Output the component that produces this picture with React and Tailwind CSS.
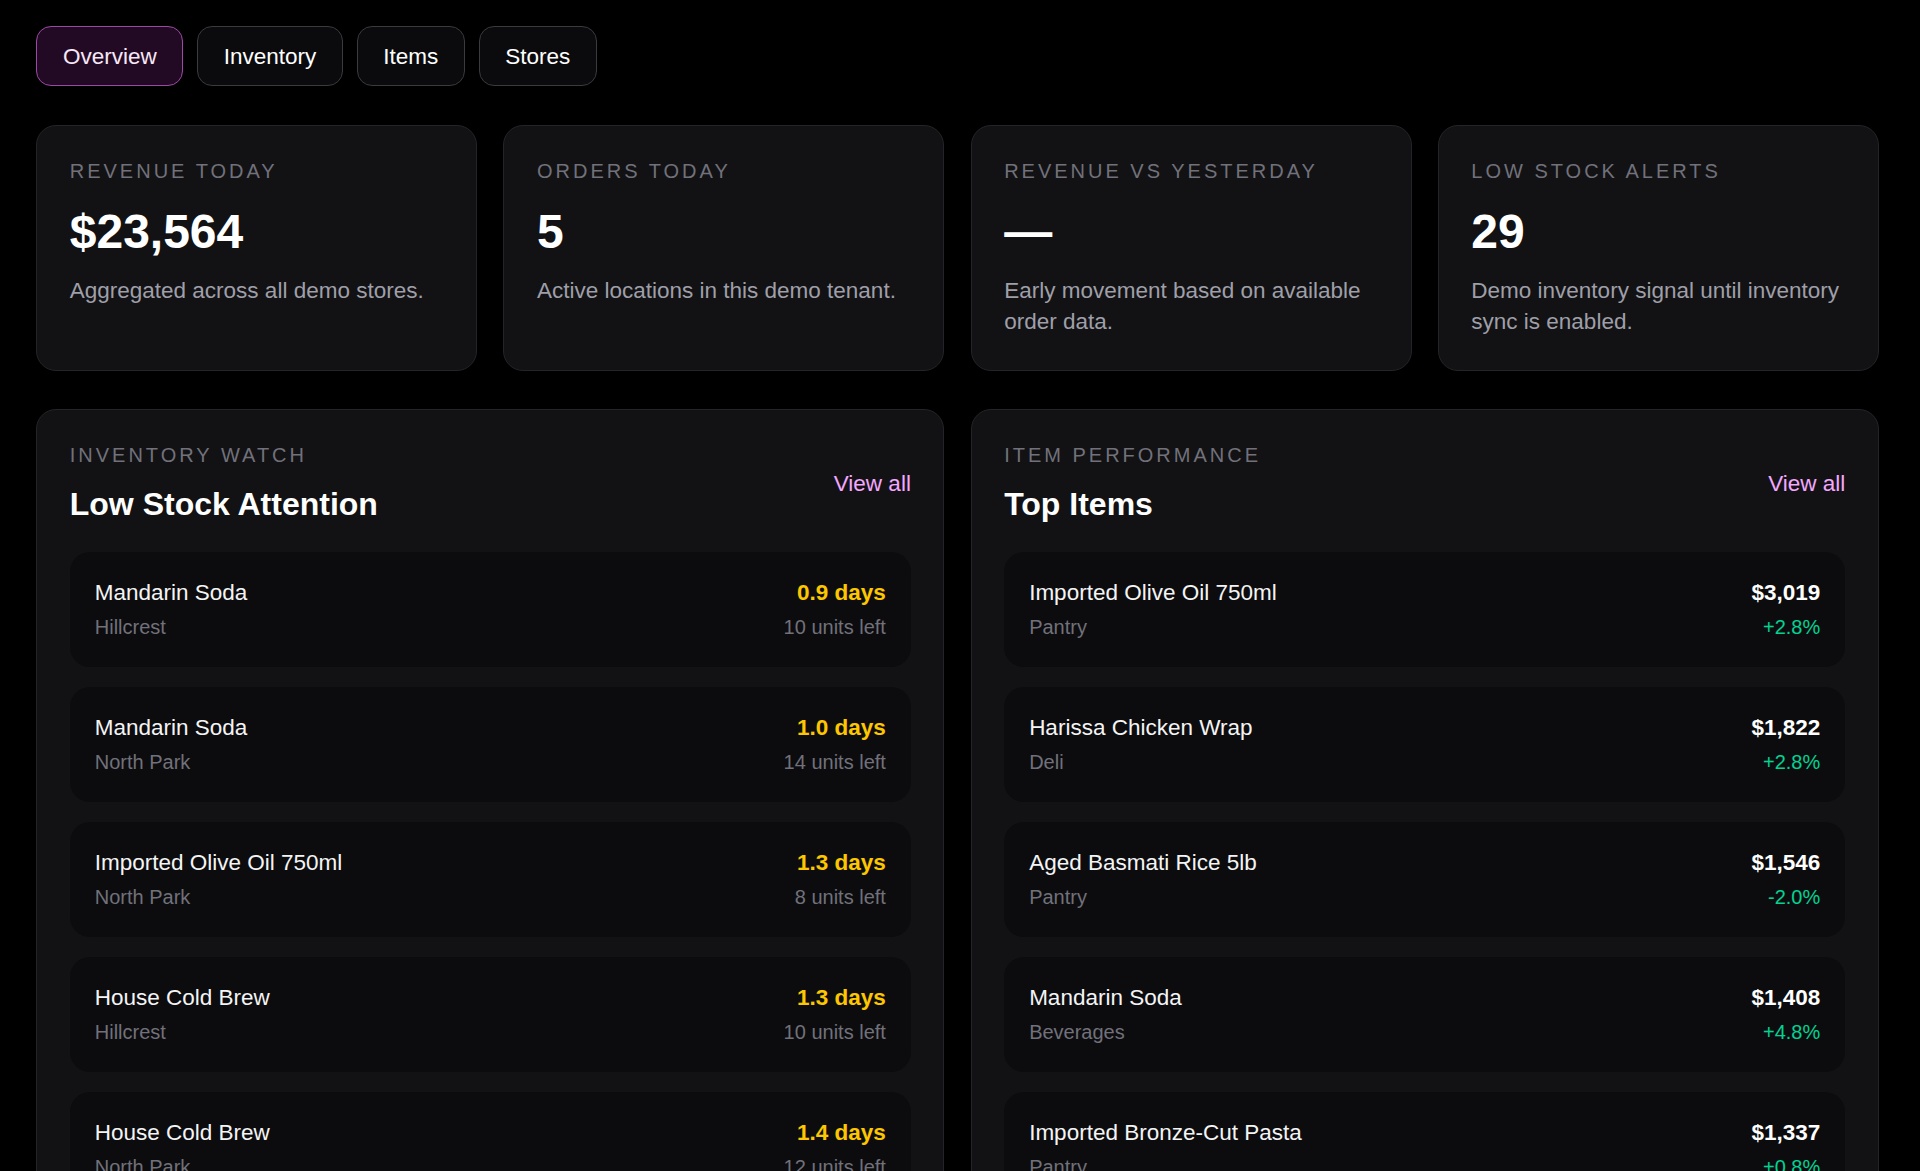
import React from "react";

const tabs = ["Overview", "Inventory", "Items", "Stores"];

const kpis = [
  { label: "Revenue today", value: "$23,564", desc: "Aggregated across all demo stores." },
  { label: "Orders today", value: "5", desc: "Active locations in this demo tenant." },
  { label: "Revenue vs yesterday", value: "—", desc: "Early movement based on available order data." },
  { label: "Low stock alerts", value: "29", desc: "Demo inventory signal until inventory sync is enabled." },
];

const lowStock = [
  { name: "Mandarin Soda", store: "Hillcrest", days: "0.9 days", units: "10 units left" },
  { name: "Mandarin Soda", store: "North Park", days: "1.0 days", units: "14 units left" },
  { name: "Imported Olive Oil 750ml", store: "North Park", days: "1.3 days", units: "8 units left" },
  { name: "House Cold Brew", store: "Hillcrest", days: "1.3 days", units: "10 units left" },
  { name: "House Cold Brew", store: "North Park", days: "1.4 days", units: "12 units left" },
];

const topItems = [
  { name: "Imported Olive Oil 750ml", cat: "Pantry", amount: "$3,019", change: "+2.8%" },
  { name: "Harissa Chicken Wrap", cat: "Deli", amount: "$1,822", change: "+2.8%" },
  { name: "Aged Basmati Rice 5lb", cat: "Pantry", amount: "$1,546", change: "-2.0%" },
  { name: "Mandarin Soda", cat: "Beverages", amount: "$1,408", change: "+4.8%" },
  { name: "Imported Bronze-Cut Pasta", cat: "Pantry", amount: "$1,337", change: "+0.8%" },
];

function Label({ children }) {
  return (
    <div className="text-base uppercase leading-6 tracking-[0.15em] text-zinc-500">{children}</div>
  );
}

function Panel({ label, title, children }) {
  return (
    <section className="rounded-2xl border border-[#242428] bg-[#121214] px-[26px] py-6">
      <div className="flex items-center justify-between">
        <div>
          <Label>{label}</Label>
          <h2 className="mt-[11px] text-[1.6rem] font-bold leading-tight text-white">{title}</h2>
        </div>
        <a className="pt-0.5 text-lg leading-7 text-fuchsia-300">View all</a>
      </div>
      <div className="mt-[22px] flex flex-col gap-4">{children}</div>
    </section>
  );
}

function Row({ title, sub, right, rightSub, rightClass, subClass }) {
  return (
    <div className="flex items-start justify-between rounded-2xl bg-[#0c0c0e] p-5">
      <div>
        <div className="text-lg leading-[26px] text-zinc-100">{title}</div>
        <div className="mt-0.5 text-base leading-6 text-zinc-500">{sub}</div>
      </div>
      <div className="text-right">
        <div className={`text-lg font-bold leading-[26px] ${rightClass}`}>{right}</div>
        <div className={`mt-0.5 text-base leading-6 ${subClass}`}>{rightSub}</div>
      </div>
    </div>
  );
}

export default function App() {
  return (
    <div className="min-h-screen bg-black font-['Liberation_Sans',Arial,Helvetica,sans-serif] text-zinc-100">
      <div className="[zoom:1.25] pl-[29px] pr-[33px] pt-[21px] pb-10">
        <nav className="flex gap-[11px]">
          {tabs.map((t, i) => (
            <button
              key={t}
              className={
                i === 0
                  ? "rounded-xl border border-[#9d4aa6] bg-[#230a24] px-[20.5px] py-[9px] text-lg leading-7 text-[#f7e8f7]"
                  : "rounded-xl border border-[#3a3a3f] bg-[#0b0b0d] px-[20.5px] py-[9px] text-lg leading-7 text-white"
              }
            >
              {t}
            </button>
          ))}
        </nav>

        <div className="mt-[31px] grid grid-cols-4 gap-[21px]">
          {kpis.map((k) => (
            <div key={k.label} className="rounded-2xl border border-[#242428] bg-[#121214] px-[26px] pt-6 pb-[25px]">
              <Label>{k.label}</Label>
              <div className="mt-4 text-[2.4rem] font-bold leading-[1.1] text-white">{k.value}</div>
              <p className="mt-[13px] text-lg leading-[1.42] text-zinc-400">{k.desc}</p>
            </div>
          ))}
        </div>

        <div className="mt-[31px] grid grid-cols-2 gap-[21px]">
          <Panel label="Inventory watch" title="Low Stock Attention">
            {lowStock.map((r, i) => (
              <Row
                key={i}
                title={r.name}
                sub={r.store}
                right={r.days}
                rightSub={r.units}
                rightClass="text-yellow-400"
                subClass="text-zinc-500"
              />
            ))}
          </Panel>
          <Panel label="Item performance" title="Top Items">
            {topItems.map((r, i) => (
              <Row
                key={i}
                title={r.name}
                sub={r.cat}
                right={r.amount}
                rightSub={r.change}
                rightClass="text-white"
                subClass="text-emerald-400"
              />
            ))}
          </Panel>
        </div>
      </div>
    </div>
  );
}
